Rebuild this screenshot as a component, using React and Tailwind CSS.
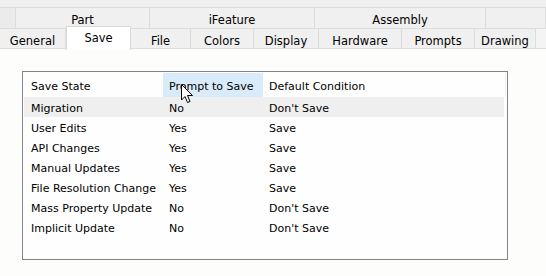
import React from "react";

const groupTabs = [
  { label: "", w: "w-[16px]" },
  { label: "Part", w: "w-[134px]" },
  { label: "iFeature", w: "w-[165px]" },
  { label: "Assembly", w: "w-[171px]" },
  { label: "", w: "flex-1" },
];

const tabs = [
  { label: "General", w: "w-[66px]" },
  { label: "Save", w: "w-[65px]", active: true },
  { label: "File", w: "w-[60px]" },
  { label: "Colors", w: "w-[63px]" },
  { label: "Display", w: "w-[65px]" },
  { label: "Hardware", w: "w-[83px]" },
  { label: "Prompts", w: "w-[73px]" },
  { label: "Drawing", w: "w-[61px]" },
];

const rows = [
  ["Migration", "No", "Don't Save"],
  ["User Edits", "Yes", "Save"],
  ["API Changes", "Yes", "Save"],
  ["Manual Updates", "Yes", "Save"],
  ["File Resolution Change", "Yes", "Save"],
  ["Mass Property Update", "No", "Don't Save"],
  ["Implicit Update", "No", "Don't Save"],
];

const Cursor = () => (
  <svg
    className="absolute left-[181px] top-[84px]"
    width="13"
    height="20"
    viewBox="0 0 13 20"
  >
    <path
      d="M0.5 0.5 L0.5 16 L4 12.5 L6.5 18.5 L9 17.5 L6.5 11.5 L11.5 11.5 Z"
      fill="#fff"
      stroke="#000"
      strokeWidth="1"
      strokeLinejoin="round"
    />
  </svg>
);

export default function App() {
  return (
    <div
      className="relative w-[546px] h-[276px] bg-[#fdfdfc] text-black overflow-hidden"
      style={{ fontFamily: '"DejaVu Sans", Verdana, sans-serif' }}
    >
      {/* tab strip */}
      <div className="h-[7px] bg-[#f0f0f0]"></div>
      <div className="flex h-[21px] bg-[#f0f0f0] border-t border-[#dcdcdc] text-[11.5px]">
        {groupTabs.map((t, i) => (
          <div
            key={i}
            className={`${t.w} flex items-center justify-center pt-[5px] border-r border-[#dcdcdc] ${i === 0 ? "bg-[#ebebeb]" : ""}`}
          >
            {t.label}
          </div>
        ))}
      </div>
      <div className="flex h-[21px] bg-[#f4f4f4] border-t border-b border-[#dcdcdc] text-[11.5px]">
        {tabs.map((t) =>
          t.active ? (
            <div
              key={t.label}
              className={`${t.w} relative -mt-[3px] h-[24px] bg-white border border-b-0 border-[#d9d9d9] flex items-center justify-center`}
            >
              {t.label}
            </div>
          ) : (
            <div
              key={t.label}
              className={`${t.w} flex items-center justify-center bg-[#f0f0f0] border-r border-[#dcdcdc] pt-[7px]`}
            >
              {t.label}
            </div>
          )
        )}
        <div className="flex-1"></div>
      </div>

      {/* list */}
      <div className="ml-[22px] mt-[22px] w-[486px] h-[189px] border border-[#838383] bg-[#fefefe] p-[1px] text-[11px]">
        <div className="flex h-[24px] items-center pr-[2px] border-r border-[#f0f0f0]">
          <div className="w-[139px] pl-[7px] pt-[4px]">Save State</div>
          <div className="w-[100px] h-full pl-[6px] pt-[4px] flex items-center bg-[#d9ebf9]">
            Prompt to Save
          </div>
          <div className="pl-[6px] pt-[4px]">Default Condition</div>
        </div>
        {rows.map((r, i) => (
          <div
            key={r[0]}
            className={`flex h-[20px] items-center pt-[5px] mr-[2px] ${i === 0 ? "bg-[#efefef]" : ""}`}
          >
            <div className="w-[139px] pl-[7px]">{r[0]}</div>
            <div className="w-[100px] pl-[6px]">{r[1]}</div>
            <div className="pl-[6px]">{r[2]}</div>
          </div>
        ))}
      </div>

      <Cursor />
    </div>
  );
}
